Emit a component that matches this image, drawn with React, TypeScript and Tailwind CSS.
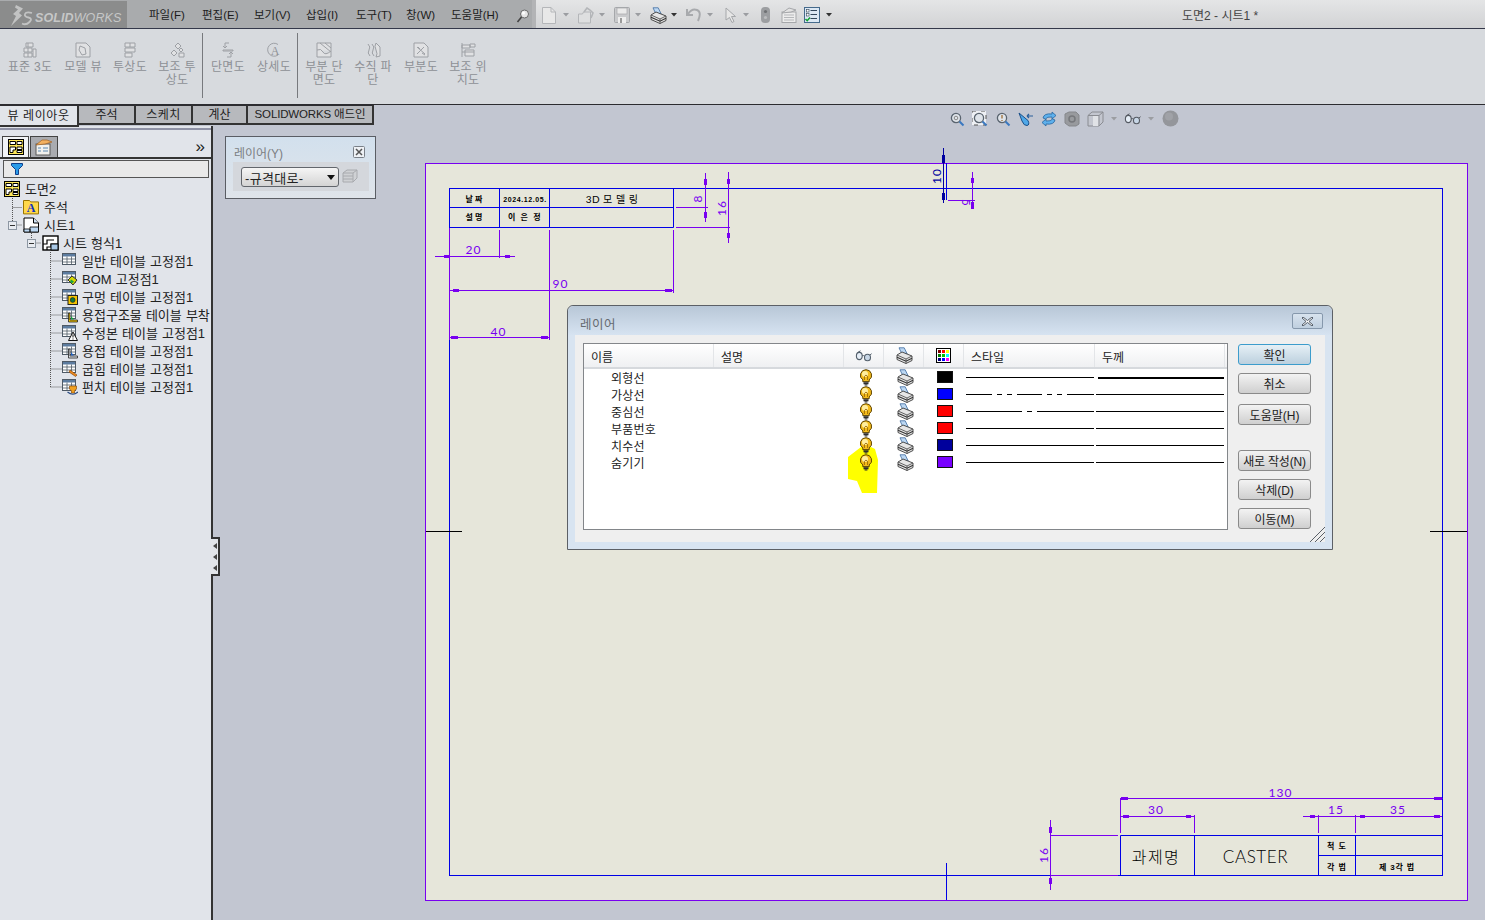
import React from "react";

const PURPLE = "#7800f0";
const BLUE = "#0000e6";

function Bulb() {
  return (
    <svg width="14" height="17" viewBox="0 0 14 17" className="block">
      <path d="M7 .7a5.6 5.6 0 0 0-3.2 10.2v1.8h6.4v-1.8A5.6 5.6 0 0 0 7 .7z" fill="#f5bc1c" stroke="#5c4200" strokeWidth="1" />
      <circle cx="6" cy="5" r="3" fill="#ffeea0" />
      <path d="M5.4 11V7.5L7 6l1.6 1.5V11" fill="none" stroke="#8a5a00" strokeWidth=".8" />
      <path d="M4.5 13.2h5M4.5 14.6h5M5.6 16h2.8" stroke="#2e2e2e" strokeWidth="1.1" />
    </svg>
  );
}
function Printer() {
  return (
    <svg width="17" height="17" viewBox="0 0 17 17" className="block">
      <path d="M3 .8h5.2l3 6.2H6z" fill="#bcd8f4" stroke="#4f78a8" strokeWidth=".9" />
      <path d="M1 8l5-3 10 4v4.5l-6 3-9-4z" fill="#e6e6e6" stroke="#3c3c3c" strokeWidth=".9" />
      <path d="M1 8l9 4 6-3" fill="none" stroke="#555" strokeWidth=".9" />
      <path d="M1 10.2l9 4 6-3" fill="none" stroke="#333" strokeWidth="1.1" />
      <path d="M10 12v4.5" stroke="#444" strokeWidth=".8" />
    </svg>
  );
}
function Glasses({ c = "#54606c" }: { c?: string }) {
  return (
    <svg width="17" height="12" viewBox="0 0 17 12" className="block">
      <ellipse cx="4.3" cy="6" rx="2.9" ry="3.6" fill="#e6eef7" stroke={c} strokeWidth="1.1" />
      <ellipse cx="12.5" cy="7.5" rx="3" ry="3.3" fill="#c7d6e6" stroke={c} strokeWidth="1.1" />
      <path d="M7 5.8q1.5-.7 2.8.5M2.5 2.6L5.5.8M15 5l1.6-1.3" fill="none" stroke={c} strokeWidth="1" />
    </svg>
  );
}
function ColorGrid() {
  const cs = ["#800000", "#ff0000", "#ffff00", "#008000", "#00c000", "#00ffff", "#000080", "#0000ff", "#ff00ff"];
  return (
    <svg width="15" height="15" viewBox="0 0 15 15" className="block">
      <rect x=".5" y=".5" width="14" height="14" fill="#fff" stroke="#000" />
      {cs.map((c, i) => (
        <rect key={i} x={2 + (i % 3) * 4} y={2 + Math.floor(i / 3) * 4} width="3" height="3" fill={c} />
      ))}
    </svg>
  );
}
function DrawingIcon({ s = 16 }: { s?: number }) {
  return (
    <svg width={s} height={s} viewBox="0 0 16 16" className="block">
      <rect x=".5" y=".5" width="15" height="15" fill="#ffe85a" stroke="#000" />
      <path d="M2 2.5h5.5v3H2zM9 2.5h5v3H9z" fill="#fff" stroke="#000" />
      <path d="M2 13.5V8h5.5v3H5v2.5zM9 8h5v2.5H9zM9 11.5h5v2H9z" fill="#fff" stroke="#000" />
    </svg>
  );
}
function FolderA() {
  return (
    <svg width="16" height="16" viewBox="0 0 16 16" className="block">
      <path d="M.5 1.5h6l1.2 1.4h7.8v12H.5z" fill="#ffd84a" stroke="#9a7400" />
      <text x="8" y="13" textAnchor="middle" fontSize="12" fontWeight="700" fill="#1030c0" fontFamily="Liberation Serif, serif">A</text>
    </svg>
  );
}
function SheetIcon() {
  return (
    <svg width="17" height="16" viewBox="0 0 17 16" className="block">
      <path d="M1 1h9.5l5 5v9H1z" fill="#fff" stroke="#000" />
      <path d="M10.5 1v5h5" fill="#cfe3f7" stroke="#000" />
      <path d="M1 12h6v3H1zM7 10h8.5v5H7z" fill="#bcd7f2" stroke="#000" strokeWidth=".8" />
    </svg>
  );
}
function FormatIcon() {
  return (
    <svg width="17" height="16" viewBox="0 0 17 16" className="block">
      <rect x="1" y="1" width="15" height="14" fill="#fff" stroke="#000" strokeWidth="1.4" />
      <path d="M1 9h4V5h7M5 15v-3h11M9 12V9h7" fill="none" stroke="#000" strokeWidth="1.2" />
      <rect x="9" y="9" width="7" height="6" fill="#a9c8e6" stroke="#000" />
    </svg>
  );
}
function TableBase({ children, head = "#5c7ca0" }: { children?: React.ReactNode; head?: string }) {
  return (
    <svg width="16" height="16" viewBox="0 0 16 16" className="block">
      <rect x=".5" y=".5" width="13" height="11" fill="#fff" stroke="#4f5a66" />
      <rect x="1" y="1" width="12" height="2.5" fill={head} />
      <path d="M.5 6h13M.5 9h13M5 3.5v8M9.5 3.5v8" stroke="#4f5a66" strokeWidth=".8" />
      {children}
    </svg>
  );
}
const treeIcons: Record<string, React.ReactNode> = {
  general: <TableBase />,
  bom: (
    <TableBase>
      <path d="M6 9l4-4 5 4-4 5z" fill="#d8d800" stroke="#333" />
      <path d="M9 8.5l3 2-2 2-2-2z" fill="#19a040" />
    </TableBase>
  ),
  hole: (
    <TableBase>
      <rect x="6" y="6.5" width="9.5" height="9" fill="#f3c400" stroke="#222" />
      <circle cx="10.7" cy="11" r="2.4" fill="#0d7a3a" stroke="#222" strokeWidth=".7" />
    </TableBase>
  ),
  weldment: (
    <TableBase>
      <path d="M8 6v7h7.5v2H6.5V6z" fill="#f3c400" stroke="#222" strokeWidth=".8" />
      <path d="M9 12.5V9l3 3.5z" fill="#19a040" />
    </TableBase>
  ),
  revision: (
    <TableBase>
      <path d="M11 7l4.5 8.5h-9z" fill="#fff" stroke="#111" />
      <path d="M11 9.5v3M11 13.5v1" stroke="#111" />
    </TableBase>
  ),
  weld: (
    <TableBase>
      <path d="M8 6v7h7.5v2H6.5V6z" fill="#dfe3e8" stroke="#222" strokeWidth=".8" />
      <path d="M9 12.5V9l3 3.5z" fill="#1f5fc0" />
    </TableBase>
  ),
  bend: (
    <TableBase>
      <path d="M8 9l7 5-1.4 1.5L7 11z" fill="#ef8a1d" stroke="#7a3d00" strokeWidth=".6" />
    </TableBase>
  ),
  punch: (
    <TableBase>
      <path d="M7.5 7h7v3l-2 2v2h-3v-2l-2-2z" fill="#f0a020" stroke="#7a3d00" strokeWidth=".6" />
      <path d="M5.5 13q5.5 4.5 10.5 0" fill="none" stroke="#2a4a80" strokeWidth="1.1" />
    </TableBase>
  ),
};

function Gray({ d, a }: { d: string; a?: boolean }) {
  return (
    <svg width="16" height="16" viewBox="0 0 16 16" className="block">
      <path d={d} fill={a ? "none" : "#e0e1e3"} stroke="#9da0a5" strokeWidth="1" />
      {a && <text x="9" y="13" textAnchor="middle" fontSize="12" fill="#8f9297" fontFamily="Liberation Serif, serif">A</text>}
    </svg>
  );
}

const cmdIcons: Record<string, string> = {
  std: "M4 1h7v4H4zM2 6h8v4H2zM2 11h8v4H2zM11 7h3v8h-3zM6 1v4M6 6v4M6 11v4",
  model: "M1 1h10l4 4v10H1zM5 4l5 2 1 6-4 1-3-5z",
  proj: "M3 1h10v4H3zM3 6h10v4H3zM3 11h7v4H3zM8 1v4",
  aux: "M9 1l3 3-3 3-3-3zM5 8l3 3-3 3-3-3zM12 6l2 2-2 2-2-2zM10 11h5v4h-5z",
  sect: "M5 1h4M5 1v5M3 4l2 2 2-2M11 15h-4M11 15v-5M9 12l2-2 2 2M3 8h10v1H3z",
  detail: "M12 2.5A6.5 6.5 0 1 0 12 13",
  broken: "M1 1h14v14H1zM1 8q4-2 6 2t8-1M4 1l11 9M9 1l6 5",
  brk: "M3 2q3 3 1 6t1 6M7 2q3 3 1 6t1 6M11 1l4 4v9l-4 1q2-3 0-7t0-7z",
  crop: "M1 1h10l4 4v10H1zM4 5l8 7M11 5l-7 7M5 5l2 2M9 11l3 2",
  alt: "M2 1v14M2 3h8v3H2zM10 2h5v3h-5zM2 10h12M5 8h9v6H5z",
};

const commands = [
  { w: "w-[48px]", lines: ["표준 3도"], icon: "std" },
  { w: "w-[58px]", lines: ["모델 뷰"], icon: "model" },
  { w: "w-[36px]", lines: ["투상도"], icon: "proj" },
  { w: "w-[50px] ml-[4px]", lines: ["보조 투", "상도"], icon: "aux" },
  { sep: true },
  { w: "w-[50px]", lines: ["단면도"], icon: "sect" },
  { w: "w-[42px]", lines: ["상세도"], icon: "detail" },
  { sep: true, cls: "ml-[2px]" },
  { w: "w-[52px]", lines: ["부분 단", "면도"], icon: "broken" },
  { w: "w-[46px]", lines: ["수직 파", "단"], icon: "brk" },
  { w: "w-[50px]", lines: ["부분도"], icon: "crop" },
  { w: "w-[44px]", lines: ["보조 위", "치도"], icon: "alt" },
] as { w?: string; lines?: string[]; icon?: string; sep?: boolean; cls?: string }[];

const menus = [
  { t: "파일(F)", w: "w-[53px]" },
  { t: "편집(E)", w: "w-[52px]" },
  { t: "보기(V)", w: "w-[52px]" },
  { t: "삽입(I)", w: "w-[50px]" },
  { t: "도구(T)", w: "w-[50px]" },
  { t: "창(W)", w: "w-[45px]" },
  { t: "도움말(H)", w: "w-[65px]" },
];

function Caret({ dark = false }: { dark?: boolean }) {
  return (
    <svg width="6" height="4" viewBox="0 0 6 4" className="block">
      <path d="M0 0h6L3 3.5z" fill={dark ? "#333" : "#9b9da1"} />
    </svg>
  );
}

function QuickBar() {
  const g = "#b4b6b9";
  return (
    <div className="flex h-full items-center pl-[6px] pt-[2px]">
      <div className="flex w-[36px] items-center">
        <svg width="14" height="17" viewBox="0 0 14 17" className="block">
          <path d="M.5.5H9L13.500 5v11.500H.5z" fill="#e8e8e8" stroke={g} />
          <path d="M9 .5V5h4.500" fill="none" stroke={g} />
        </svg>
        <span className="ml-[7px]"><Caret /></span>
      </div>
      <div className="flex w-[36px] items-center">
        <svg width="16" height="17" viewBox="0 0 16 17" className="block">
          <path d="M.5 7h4l1-2h7v11H.5z" fill="#dedfe0" stroke={g} />
          <path d="M6 5l3-4 3 2 3 3-2 5" fill="none" stroke={g} strokeWidth="1.6" />
        </svg>
        <span className="ml-[5px]"><Caret /></span>
      </div>
      <div className="flex w-[36px] items-center">
        <svg width="16" height="16" viewBox="0 0 16 16" className="block">
          <rect x=".5" y=".5" width="15" height="15" rx="1" fill="#c9cacc" stroke="#a5a7aa" />
          <rect x="3" y="1" width="10" height="6" fill="#eaeaea" stroke="#a5a7aa" strokeWidth=".7" />
          <rect x="4" y="10" width="8" height="6" fill="#eee" />
          <rect x="6" y="11" width="2" height="5" fill="#9a9a9a" />
        </svg>
        <span className="ml-[5px]"><Caret /></span>
      </div>
      <div className="flex w-[36px] items-center">
        <Printer />
        <span className="ml-[4px]"><Caret dark /></span>
      </div>
      <div className="flex w-[36px] items-center">
        <svg width="16" height="16" viewBox="0 0 16 16" className="block">
          <path d="M1 2v6h6M2 7q4-6 9-4t1 11" fill="none" stroke="#a8aaad" strokeWidth="2" />
        </svg>
        <span className="ml-[5px]"><Caret /></span>
      </div>
      <div className="flex w-[39px] items-center pl-[3px]">
        <svg width="12" height="16" viewBox="0 0 12 16" className="block">
          <path d="M1 1l9.5 8.5h-4l2.500 5-2 1-2.500-5L1 13z" fill="#e6e6e6" stroke="#a5a7aa" />
        </svg>
        <span className="ml-[6px]"><Caret /></span>
      </div>
      <svg width="9" height="16" viewBox="0 0 9 16" className="block">
        <rect width="9" height="16" rx="4" fill="#9c9ea1" />
        <circle cx="4.5" cy="4.5" r="1.6" fill="#6f7174" />
        <circle cx="4.5" cy="10.5" r="1.6" fill="#bcbdbf" />
      </svg>
      <svg width="16" height="16" viewBox="0 0 16 16" className="ml-[11px] block">
        <rect x="1" y="5" width="14" height="10.5" fill="#ececec" stroke="#a5a7aa" />
        <path d="M3 8h10M3 10.5h10M3 13h10" stroke="#b5b7ba" />
        <path d="M1 6l7-5 7 2-5 2z" fill="#e2e2e2" stroke="#a5a7aa" />
      </svg>
      <svg width="16" height="16" viewBox="0 0 16 16" className="ml-[7px] block">
        <rect x=".5" y=".5" width="15" height="15" fill="#dce8f4" stroke="#456a8c" />
        <rect x="2.5" y="2.5" width="2.5" height="2.5" fill="#fff" stroke="#345" strokeWidth=".6" />
        <rect x="2.5" y="6.5" width="2.5" height="2.5" fill="#fff" stroke="#345" strokeWidth=".6" />
        <path d="M6.5 3.5H13M6.5 7.5H13M6.5 11.5H13" stroke="#33475c" />
        <path d="M1.5 12l1.7 1.700L6 10.500" fill="none" stroke="#10a030" strokeWidth="1.5" />
      </svg>
      <span className="ml-[6px]"><Caret dark /></span>
    </div>
  );
}

function Logo() {
  return (
    <div className="mt-px flex h-[27px] w-[127px] shrink-0 items-end bg-[#8b8c8c] pl-[9px]">
      <svg width="24" height="23" viewBox="0 0 24 23" className="mb-[1px] block shrink-0">
        <path d="M7 1l7 3.500-4 4.500 3 2.500L2 22l5-10-3-2 5-4.500-3-2z" fill="#c2c3c3" />
        <path d="M23 9q-6-1.500-7 1t3.500 3.500 1 4.500-7.500 1.500" fill="none" stroke="#c2c3c3" strokeWidth="1.8" />
      </svg>
      <span className="mb-[4px] ml-[2px] text-[12.5px] font-bold italic leading-none tracking-[.1px] text-[#c6c7c7]">
        SOLID<span className="font-normal">WORKS</span>
      </span>
    </div>
  );
}

function TitleBar() {
  return (
    <div className="flex h-[29px] shrink-0 border-b border-[#34384a] bg-gradient-to-b from-[#e4e5e6] to-[#d2d3d5]">
      <div className="flex h-[28px] w-[536px] shrink-0 items-start border-r-4 border-[#b3b4b6] bg-[#a9abad]">
        <Logo />
        <div className="flex h-[28px] items-center pl-[22px] pt-[3px] text-[11.5px] text-[#1c1c1c]">
          {menus.map((m) => (
            <span key={m.t} className={`${m.w} whitespace-nowrap`}>{m.t}</span>
          ))}
          <svg width="13" height="14" viewBox="0 0 13 14" className="block">
            <circle cx="8.5" cy="5" r="4" fill="#e6e6e6" stroke="#6a6a6a" />
            <circle cx="7.5" cy="4" r="1.5" fill="#fff" />
            <path d="M5.5 8L1.5 13" stroke="#444" strokeWidth="1.6" />
          </svg>
        </div>
      </div>
      <div className="w-[646px] shrink-0"><QuickBar /></div>
      <div className="pt-[8px] text-[12px] leading-[16px] text-[#444] whitespace-nowrap">도면2 - 시트1 *</div>
    </div>
  );
}

function CommandBar() {
  return (
    <div className="flex h-[76px] shrink-0 items-start border-b border-[#2c2c30] bg-[#d7dade] pl-[6px] pt-[13px]">
      {commands.map((c, i) =>
        c.sep ? (
          <div key={i} className={`-mt-[9px] h-[65px] w-px shrink-0 bg-[#77797d] ${c.cls ?? ""}`} />
        ) : (
          <div key={i} className={`flex shrink-0 flex-col items-center ${c.w}`}>
            <Gray d={cmdIcons[c.icon!]} a={c.icon === "detail"} />
            <div className="mt-[3px] whitespace-nowrap text-center text-[12px] leading-[13px] tracking-[.3px] text-[#8d9095]">
              {c.lines!.map((l) => (
                <div key={l}>{l}</div>
              ))}
            </div>
          </div>
        ),
      )}
    </div>
  );
}

const tabs = [
  { t: "주석", w: "w-[57px]" },
  { t: "스케치", w: "w-[57px] tracking-[.5px]" },
  { t: "계산", w: "w-[55px]" },
  { t: "SOLIDWORKS 애드인", w: "w-[126px] text-[11.5px] tracking-[-.15px]" },
];

function ViewBar() {
  return (
    <div className="ml-[575px] flex items-center pt-[5px]">
      {[0, 1, 2].map((n) => (
        <svg key={n} width="16" height="16" viewBox="0 0 16 16" className="mr-[7px] block">
          {n === 1 && <rect x="0" y="0" width="14" height="14" fill="#eef0f4" stroke="#555" strokeDasharray="4 5" />}
          <circle cx="7" cy="7" r="4.6" fill="#dfe4ea" stroke="#5a646f" strokeWidth="1.3" />
          {n === 2 && <path d="M7 4v3.5M7 9v1" stroke="#8a4a00" />}
          {n === 0 && <circle cx="7" cy="7" r="1.8" fill="none" stroke="#888" />}
          <path d="M10.5 10.5l4 4" stroke="#3a78c0" strokeWidth="2" />
        </svg>
      ))}
      <svg width="16" height="16" viewBox="0 0 16 16" className="mr-[7px] block">
        <path d="M1 2l3 8q2 5 5 4.5t1-5z" fill="#4fa8e8" stroke="#1c4f88" />
        <path d="M9 5h6M9 5l2-2M9 5l2 2" stroke="#2a5f9c" strokeWidth="1.2" fill="none" />
      </svg>
      <svg width="16" height="16" viewBox="0 0 16 16" className="mr-[7px] block">
        <path d="M2 7q1-5 9-4V1l4 3.5L11 8V6Q6 5.5 4.5 8z" fill="#5eb0ec" stroke="#27649e" strokeWidth=".8" />
        <path d="M14 9q-1 5-9 4v2l-4-3.5L5 8v2q5 .5 6.500-2z" fill="#5eb0ec" stroke="#27649e" strokeWidth=".8" />
      </svg>
      <svg width="16" height="16" viewBox="0 0 16 16" className="mr-[7px] block">
        <path d="M1 3l4-2h7l3 3v9l-3 2H5l-4-3z" fill="#989a9e" stroke="#85878b" />
        <circle cx="8" cy="8" r="3" fill="none" stroke="#76787c" strokeWidth="1.5" />
      </svg>
      <svg width="17" height="16" viewBox="0 0 17 16" className="block">
        <path d="M1 4.5L5 1h11v10l-4 4H1z" fill="#c3c6cf" stroke="#8a8c92" />
        <path d="M11.5 4.5V15H6V4.5z" fill="#e0e2e6" />
        <path d="M1 4.5h11l4-3.500M12 4.5V15" fill="none" stroke="#8a8c92" />
      </svg>
      <span className="ml-[7px]"><Caret /></span>
      <span className="ml-[7px]"><Glasses c="#555a62" /></span>
      <span className="ml-[7px]"><Caret /></span>
      <svg width="17" height="17" viewBox="0 0 17 17" className="ml-[8px] block">
        <circle cx="8.5" cy="8.5" r="8" fill="#94969b" />
        <circle cx="7" cy="6.5" r="4" fill="#a0a2a7" />
      </svg>
    </div>
  );
}

function TabsRow() {
  return (
    <div className="relative z-10 flex h-[21px] shrink-0 items-start">
      <div className="flex h-[22px] w-[79px] items-center justify-center border-y border-b-2 border-r-2 border-t-[#2c2c30] border-b-[#333] border-r-[#333] bg-[#e2e5ea] text-[12px] tracking-[.6px] text-[#222]">뷰 레이아웃</div>
      {tabs.map((t) => (
        <div key={t.t} className={`flex h-[20px] ${t.w} shrink-0 items-center justify-center whitespace-nowrap border-t border-b-2 border-r-2 border-t-[#2c2c30] border-b-[#333] border-r-[#333] bg-[#b7b9bd] text-[#222] ${t.t.length > 4 ? "" : "text-[12px]"}`}>
          {t.t}
        </div>
      ))}
      <ViewBar />
    </div>
  );
}

const treeRows = [
  { icon: <DrawingIcon />, t: "도면2", pl: "pl-[4px]", gap: "ml-[5px]" },
  { icon: <FolderA />, t: "주석", pl: "pl-[23px]", gap: "ml-[5px]" },
  { icon: <SheetIcon />, t: "시트1", pl: "pl-[23px]", gap: "ml-[4px]" },
  { icon: <FormatIcon />, t: "시트 형식1", pl: "pl-[42px]", gap: "ml-[4px]" },
  { icon: treeIcons.general, t: "일반 테이블 고정점1", pl: "pl-[62px]", gap: "ml-[4px]" },
  { icon: treeIcons.bom, t: "BOM 고정점1", pl: "pl-[62px]", gap: "ml-[4px]" },
  { icon: treeIcons.hole, t: "구멍 테이블 고정점1", pl: "pl-[62px]", gap: "ml-[4px]" },
  { icon: treeIcons.weldment, t: "용접구조물 테이블 부착", pl: "pl-[62px]", gap: "ml-[4px]" },
  { icon: treeIcons.revision, t: "수정본 테이블 고정점1", pl: "pl-[62px]", gap: "ml-[4px]" },
  { icon: treeIcons.weld, t: "용접 테이블 고정점1", pl: "pl-[62px]", gap: "ml-[4px]" },
  { icon: treeIcons.bend, t: "굽힘 테이블 고정점1", pl: "pl-[62px]", gap: "ml-[4px]" },
  { icon: treeIcons.punch, t: "펀치 테이블 고정점1", pl: "pl-[62px]", gap: "ml-[4px]" },
];

function Sidebar() {
  return (
    <div className="flex w-[213px] shrink-0 flex-col border-r-2 border-[#333] bg-[#e1e4ea]">
      <div className="mt-[2px] h-[2px] shrink-0 bg-[#8f92a6]" />
      <div className="mt-[6px] flex h-[23px] shrink-0 items-end border-b-2 border-[#333]">
        <div className="ml-[2px] flex h-[21px] w-[27px] items-center justify-center border-x border-t border-[#444] bg-[#f2f4f7]">
          <DrawingIcon />
        </div>
        <div className="ml-px flex h-[21px] w-[28px] items-center justify-center border-x border-t border-[#444] bg-[#a9abb0]">
          <svg width="18" height="17" viewBox="0 0 18 17" className="block">
            <rect x="1" y="5" width="14" height="11" fill="#f1f1ee" stroke="#5a5a5a" />
            <path d="M3 9h3M3 12h3M8 9h5M8 12h5" stroke="#5a87b0" />
            <path d="M1 6l6-5h5l5 2-7 2z" fill="#f2b060" stroke="#a06020" strokeWidth=".7" />
          </svg>
        </div>
        <div className="ml-auto pb-[2px] pr-[6px] text-[17px] leading-[16px] text-[#222]">»</div>
      </div>
      <div className="ml-[3px] mr-[2px] mt-px flex h-[18px] shrink-0 items-center border border-[#555] bg-[#e9e9e9] pl-[7px]">
        <svg width="12" height="12" viewBox="0 0 12 12" className="block">
          <path d="M.5.5h11v2l-4 4v5h-3v-5l-4-4z" fill="#2a9be8" stroke="#0e3f8c" />
        </svg>
      </div>
      <div className="relative mt-[2px] text-[13px] text-[#222]">
        <svg width="211" height="220" className="absolute left-0 top-0">
          <path
            d="M12.5 18v27M12.5 27.5h10M12.5 45h10M31.5 45v18M31.5 63h10M50.5 72v135M50.5 81h11M50.5 99h11M50.5 117h11M50.5 135h11M50.5 153h11M50.5 171h11M50.5 189h11M50.5 207h11"
            stroke="#555"
            strokeDasharray="1 1"
            fill="none"
          />
          <rect x="8.5" y="41.5" width="8" height="8" fill="#e9ecf1" stroke="#8d97a3" />
          <path d="M10 45.5h5" stroke="#333" />
          <rect x="27.5" y="59.5" width="8" height="8" fill="#e9ecf1" stroke="#8d97a3" />
          <path d="M29 63.5h5" stroke="#333" />
        </svg>
        {treeRows.map((r) => (
          <div key={r.t} className={`relative flex h-[18px] items-center whitespace-nowrap ${r.pl}`}>
            <span className="shrink-0">{r.icon}</span>
            <span className={`${r.gap} translate-y-px leading-[18px] [word-spacing:.5px]`}>{r.t}</span>
          </div>
        ))}
      </div>
    </div>
  );
}

function Dim({ x1, y1, x2, y2 }: { x1: number; y1: number; x2: number; y2: number }) {
  return <line x1={x1} y1={y1} x2={x2} y2={y2} stroke={PURPLE} />;
}

const purpleLines = [
  [449.5, 228, 449.5, 340],
  [499.5, 230, 499.5, 258],
  [549.5, 230, 549.5, 340],
  [673.5, 230, 673.5, 293],
  [435, 256.5, 515, 256.5],
  [450, 290.5, 673, 290.5],
  [450, 337.5, 549, 337.5],
  [705.5, 173, 705.5, 222],
  [728.5, 172, 728.5, 243],
  [676, 207.5, 708, 207.5],
  [676, 227.5, 730, 227.5],
  [972.5, 172, 972.5, 209],
  [948, 200.5, 975, 200.5],
  [1050.5, 820, 1050.5, 890],
  [1051, 835.5, 1118, 835.5],
  [1051, 875.5, 1118, 875.5],
  [1120.5, 798.5, 1442.5, 798.5],
  [1120.5, 798, 1120.5, 833],
  [1120.5, 816.5, 1194.5, 816.5],
  [1194.5, 815, 1194.5, 833],
  [1303, 816.5, 1442, 816.5],
  [1318.5, 815, 1318.5, 833],
  [1355.5, 815, 1355.5, 833],
];
const purpleTicks = [
  [444, 255, 6, 3], [505, 255, 5, 3], [453, 289, 6, 3], [665, 289, 7, 3], [451, 336, 7, 3], [541, 336, 7, 3],
  [704, 179, 3, 6], [704, 212, 3, 6], [727, 179, 3, 5], [727, 233, 3, 5],
  [971, 178, 3, 5], [971, 202, 3, 7],
  [1049, 827, 3, 6], [1049, 878, 3, 6],
  [1121, 797, 7, 3], [1434, 797, 8, 3], [1123, 815, 6, 3], [1186, 815, 5, 3], [1310, 815, 5, 3], [1360, 815, 5, 3], [1434, 815, 6, 3],
];

function Sheet() {
  const fam = "Liberation Sans, Noto Sans CJK KR, sans-serif";
  const thin = "Lato, Noto Sans CJK KR, sans-serif";
  const t = { fontFamily: fam, textAnchor: "middle" as const };
  const d = { fontFamily: thin, textAnchor: "middle" as const };
  return (
    <svg width="1272" height="794" viewBox="213 126 1272 794" className="absolute left-0 top-0 block">
      <rect x="425.5" y="163.5" width="1042" height="737" fill="#e6e6da" stroke={PURPLE} />
      <rect x="449.5" y="188.5" width="993" height="687" fill="none" stroke={BLUE} />
      <path
        d="M449.5 207.5H673.5M449.5 227.5H673.5M499.5 188.5V227.5M549.5 188.5V227.5M673.5 188.5V227.5M1120.5 835.5H1442.5M1318.5 855.5H1442.5M1120.5 835.5V875.5M1194.5 835.5V875.5M1318.5 835.5V875.5M1355.5 835.5V875.5M946.5 863V900M946.5 163V200"
        stroke={BLUE}
        fill="none"
      />
      <path d="M426 531.5H462M1430 531.5H1467" stroke="#000" />
      <path d="M943.5 148V203" stroke="#0000a0" />
      <rect x="942" y="155" width="3" height="8" fill="#0000a0" />
      <rect x="942" y="193" width="3" height="7" fill="#0000a0" />
      {purpleLines.map((l, i) => (
        <Dim key={i} x1={l[0]} y1={l[1]} x2={l[2]} y2={l[3]} />
      ))}
      {purpleTicks.map((r, i) => (
        <rect key={i} x={r[0]} y={r[1]} width={r[2]} height={r[3]} fill={PURPLE} />
      ))}
      <g {...d} fill={PURPLE} fontSize="12" letterSpacing="1">
        <text x="473.5" y="254">20</text>
        <text x="560.5" y="288">90</text>
        <text x="498.5" y="336">40</text>
        <text x="1280.5" y="797">130</text>
        <text x="1156" y="814">30</text>
        <text x="1336" y="814">15</text>
        <text x="1398" y="814">35</text>
        <text transform="translate(702 198.5) rotate(-90)">8</text>
        <text transform="translate(726 208) rotate(-90)">16</text>
        <text transform="translate(1048 855) rotate(-90)">16</text>
        <text transform="translate(962 203) rotate(90)" fontSize="11">5</text>
      </g>
      <text {...d} transform="translate(941 176) rotate(-90)" fill="#0000a0" fontSize="12" letterSpacing="1">10</text>
      <g {...t} fill="#000">
        <text x="474" y="202" fontSize="8" fontWeight="700">날 짜</text>
        <text x="474" y="220" fontSize="8" fontWeight="700">설 명</text>
        <text x="525" y="202" fontSize="7" fontWeight="700" letterSpacing=".6">2024.12.05.</text>
        <text x="525" y="220" fontSize="8" fontWeight="700" letterSpacing="1.5">이 은 정</text>
        <text {...d} x="612" y="203" fontSize="10" letterSpacing=".5">3D 모 델 링</text>
        <text {...d} x="1156" y="863" fontSize="16" letterSpacing="1.5" fontWeight="300">과제명</text>
        <text {...d} x="1255.5" y="863" fontSize="17" fontWeight="300" letterSpacing=".6">CASTER</text>
        <text x="1337" y="849" fontSize="8" fontWeight="700" letterSpacing="1">척 도</text>
        <text x="1337" y="870" fontSize="8" fontWeight="700" letterSpacing="1">각 법</text>
        <text x="1397" y="870" fontSize="8" fontWeight="700" letterSpacing=".8">제 3각 법</text>
      </g>
    </svg>
  );
}

function LayerPanel() {
  return (
    <div className="absolute left-[12px] top-[10px] h-[63px] w-[151px] border border-[#5a5d64] bg-gradient-to-b from-[#d2e0ed] to-[#dfe4ea] px-[7px] text-[12px]">
      <div className="flex h-[25px] items-center justify-between pl-px pr-[3px] pt-[5px] text-[#7b7e82]">
        <span className="translate-y-[2px]">레이어(Y)</span>
        <svg width="12" height="12" viewBox="0 0 12 12" className="block">
          <rect x=".5" y=".5" width="11" height="11" rx="1" fill="#eef1f5" stroke="#7a8088" />
          <path d="M3 3l6 6M9 3l-6 6" stroke="#555" strokeWidth="1.5" />
        </svg>
      </div>
      <div className="flex h-[29px] w-[136px] items-start bg-[#d4d7dc] pl-[8px] pt-[5px]">
        <div className="flex h-[20px] w-[98px] items-center justify-between rounded-[3px] border border-[#62666c] bg-gradient-to-b from-[#f5f5f5] to-[#d4d4d4] pl-[3px] pr-[3px] text-[13px] tracking-[.3px] text-[#222]">
          <span className="translate-y-[1.5px]">-규격대로-</span>
          <svg width="8" height="5" viewBox="0 0 8 5" className="block">
            <path d="M0 0h8L4 5z" fill="#111" />
          </svg>
        </div>
        <svg width="16" height="14" viewBox="0 0 16 14" className="ml-[3px] mt-[2px] block">
          <path d="M1 4l4-3h10v8l-4 4H1z" fill="#cfd1d4" stroke="#a8aaae" />
          <path d="M1 4h10v9M1 7h10M1 10h10M11 4l4-3" fill="none" stroke="#a8aaae" />
        </svg>
      </div>
    </div>
  );
}

const layers = [
  { n: "외형선", c: "bg-[#000000]", s: "solid" },
  { n: "가상선", c: "bg-[#0000ff]", s: "phantom" },
  { n: "중심선", c: "bg-[#ff0000]", s: "center" },
  { n: "부품번호", c: "bg-[#ff0000]", s: "solid" },
  { n: "치수선", c: "bg-[#00009c]", s: "solid" },
  { n: "숨기기", c: "bg-[#7800ff]", s: "solid" },
];

function StyleLine({ kind }: { kind: string }) {
  const segs: Record<string, string> = {
    solid: "M0 .5H128",
    phantom: "M0 .5H26M31 .5H36M41 .5H46M51 .5H76M81 .5H86M91 .5H96M101 .5H128",
    center: "M0 .5H56M61 .5H66M71 .5H128",
  };
  return (
    <svg width="128" height="1" className="block">
      <path d={segs[kind]} stroke="#000" />
    </svg>
  );
}

function DlgBtn({ children, cls, primary }: { children: React.ReactNode; cls?: string; primary?: boolean }) {
  return (
    <div
      className={`flex h-[21px] w-[73px] shrink-0 items-center justify-center whitespace-nowrap rounded-[3px] border pt-[2px] text-[12px] text-[#222] ${
        primary
          ? "border-[#3c9ccc] bg-gradient-to-b from-[#e6f0f6] to-[#bcd0de]"
          : "border-[#8a8a8a] bg-gradient-to-b from-[#f3f3f3] to-[#cfcfcf]"
      } ${cls ?? ""}`}
    >
      {children}
    </div>
  );
}

function Dialog() {
  const head = "flex h-full items-center border-r border-[#e3e5e8] pl-[7px] pt-[5px]";
  const iconHead = "flex h-full items-center justify-center border-r border-[#e3e5e8]";
  const cols = "grid-cols-[130px_130px_40px_40px_40px_131px_130px_1fr]";
  return (
    <div className="absolute left-[354px] top-[179px] flex h-[245px] w-[766px] flex-col rounded-t-[6px] border border-[#5c6066] bg-[#d8e4f1] text-[12px] text-[#222]">
      <div className="flex h-[29px] shrink-0 items-center justify-between rounded-t-[6px] bg-gradient-to-b from-[#b8c7d7] to-[#d6e3f1] pl-[12px] pr-[9px] pt-px">
        <span className="translate-y-[4px] text-[12.5px] tracking-[.5px] text-[#666a70]">레이어</span>
        <div className="flex h-[16px] w-[31px] items-center justify-center rounded-[2px] border border-[#8698ac] bg-gradient-to-b from-[#d8e3ee] to-[#bfcfdf]">
          <svg width="11" height="9" viewBox="0 0 11 9" className="block">
            <path d="M1 0l4.5 3.5L10 0l1 1-4 3.5L11 8l-1 1-4.5-3.5L1 9 0 8l4-3.5L0 1z" fill="#f6f6f6" stroke="#46505c" strokeWidth=".9" />
          </svg>
        </div>
      </div>
      <div className="relative mx-[7px] mb-[7px] flex flex-1 bg-[#efefef] pl-[8px] pt-[8px]">
        <div className="relative h-[187px] w-[645px] shrink-0 border border-[#83868a] bg-white">
          <div className={`grid h-[25px] ${cols} border-b-2 border-[#d6d9dd] bg-gradient-to-b from-white to-[#eff0f2]`}>
            <div className={head}>이름</div>
            <div className={head}>설명</div>
            <div className={iconHead}><Glasses /></div>
            <div className={`${iconHead} pl-px`}><Printer /></div>
            <div className={iconHead}><ColorGrid /></div>
            <div className={head}>스타일</div>
            <div className={head}>두께</div>
            <div />
          </div>
          <svg width="34" height="52" viewBox="0 0 34 52" className="absolute left-[264px] top-[99px]">
            <path d="M0 14L17 1 27 6 30 17 29 50H14L9 38 0 36z" fill="#ffff00" />
          </svg>
          {layers.map((l, i) => (
            <div key={l.n} className={`relative grid h-[17px] ${cols} items-center`}>
              <div className="translate-y-[2px] pl-[27px] leading-[17px] tracking-[.2px]">{l.n}</div>
              <div />
              <div className="flex h-[17px] items-center justify-center pl-[3px]"><Bulb /></div>
              <div className="flex h-[17px] items-center justify-center pl-[2px]"><Printer /></div>
              <div className="flex -translate-y-px justify-center pl-[2px]">
                <div className={`h-[12px] w-[16px] border border-[#111] ${l.c}`} />
              </div>
              <div className="pl-[2px]"><StyleLine kind={l.s} /></div>
              <div className="pl-px">
                {i === 0 ? <div className="ml-[2px] h-[2px] w-[126px] bg-black" /> : <StyleLine kind="solid" />}
              </div>
              <div />
            </div>
          ))}
        </div>
        <div className="ml-[10px] flex flex-col pt-px">
          <DlgBtn primary>확인</DlgBtn>
          <DlgBtn cls="mt-[8px]">취소</DlgBtn>
          <DlgBtn cls="mt-[10px]">도움말(H)</DlgBtn>
          <DlgBtn cls="mt-[25px] tracking-[-.2px]">새로 작성(N)</DlgBtn>
          <DlgBtn cls="mt-[8px]">삭제(D)</DlgBtn>
          <DlgBtn cls="mt-[8px]">이동(M)</DlgBtn>
        </div>
        <svg width="15" height="15" viewBox="0 0 15 15" className="absolute bottom-0 right-0 block">
          <path d="M0 15L15 0M5 15L15 5M10 15l5-5" stroke="#5a6068" />
        </svg>
      </div>
    </div>
  );
}

function Sash() {
  return (
    <div className="absolute -left-[2px] top-[411px] flex h-[39px] w-[9px] flex-col items-center justify-center gap-[5px] border-y-2 border-r-2 border-[#333] bg-[#e2e5ea]">
      {[0, 1, 2].map((i) => (
        <svg key={i} width="4" height="6" viewBox="0 0 4 6" className="block">
          <path d="M4 0v6L0 3z" fill="#444" />
        </svg>
      ))}
    </div>
  );
}

export default function App() {
  return (
    <div className="flex h-[920px] w-[1485px] flex-col overflow-hidden bg-[#c2c6d1] font-['Liberation_Sans','Noto_Sans_CJK_KR',sans-serif]">
      <TitleBar />
      <CommandBar />
      <TabsRow />
      <div className="flex min-h-0 flex-1">
        <Sidebar />
        <div className="relative flex-1">
          <Sheet />
          <LayerPanel />
          <Dialog />
          <Sash />
        </div>
      </div>
    </div>
  );
}
